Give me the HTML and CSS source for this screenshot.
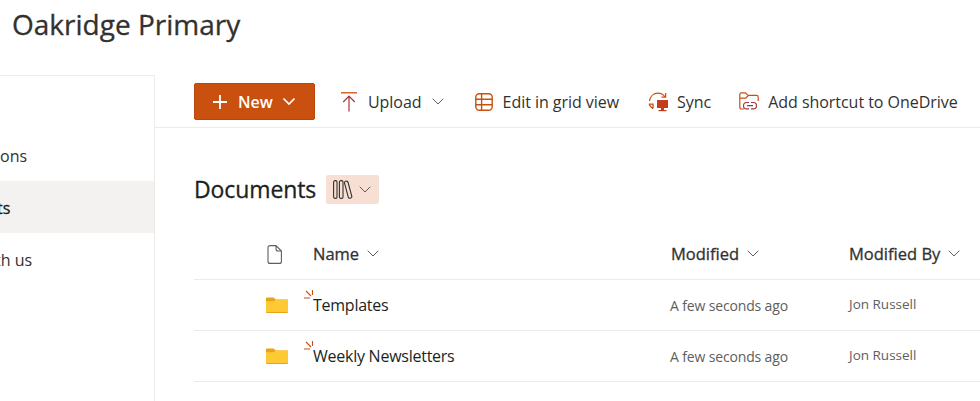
FILE: index.html
```
<!DOCTYPE html>
<html lang="en">
<head>
<meta charset="utf-8">
<title>Oakridge Primary</title>
<link rel="stylesheet" href="styles.css">
</head>
<body>
<header class="site-header"><h1 class="site-title">Oakridge Primary</h1></header>
<div class="shell">
  <nav class="side-nav">
    <a class="nav-item">ons</a>
    <a class="nav-item nav-item-active">ts</a>
    <a class="nav-item nav-item-last">th us</a>
  </nav>
  <main class="content">
    <div class="command-bar">
      <button class="new-btn">
        <svg class="new-plus" width="16" height="16" viewBox="0 0 16 16"><path d="M8 1v14M1 8h14" stroke="#fff" stroke-width="1.8" fill="none"/></svg>
        <span>New</span>
        <svg width="14" height="9" viewBox="0 0 14 9"><path d="M1.5 1.5 7 7l5.5-5.5" stroke="#fff" stroke-width="1.6" fill="none"/></svg>
      </button>
      <div class="cmd cmd-upload">
        <svg class="cmd-icon" width="16" height="20" viewBox="0 0 16 20"><path d="M0 .8h16" stroke="#ca5010" stroke-width="1.3" fill="none"/><path d="M8 19.5V4.5M2.2 10 8 4.2 13.8 10" stroke="#a4373a" stroke-width="1.2" fill="none"/></svg>
        <span>Upload</span>
        <svg class="chev" width="12" height="7" viewBox="0 0 12 7"><path d="M.7.7 6 6l5.3-5.3" stroke="#605e5c" stroke-width="1" fill="none"/></svg>
      </div>
      <div class="cmd cmd-grid">
        <svg class="cmd-icon" width="18" height="18" viewBox="0 0 18 18"><rect x=".8" y=".8" width="16.4" height="16.4" rx="3.5" stroke="#ca5010" stroke-width="1.4" fill="none"/><path d="M.8 6.3h16.4M.8 11.7h16.4M6.6.8v16.4" stroke="#ca5010" stroke-width="1.4" fill="none"/></svg>
        <span>Edit in grid view</span>
      </div>
      <div class="cmd cmd-sync">
        <svg class="cmd-icon" width="21" height="20" viewBox="0 0 21 20"><path d="M1.5 9C2.2 4.5 5.5 1.2 10 1.2c3 0 5.3 1.4 6.8 3.6" stroke="#ca5010" stroke-width="1.3" fill="none"/><path d="M17.6 1v4.2h-4.2" stroke="#ca5010" stroke-width="1.3" fill="none"/><path d="M.8 12.2h4.2v4.2M1.2 12.6c.8 1.8 2 3 3.8 4" stroke="#ca5010" stroke-width="1.3" fill="none"/><rect x="9" y="8" width="11" height="8" fill="#c43e1c"/><rect x="13" y="16" width="3" height="2" fill="#c43e1c"/><rect x="10.5" y="18" width="8" height="1.2" fill="#c43e1c"/></svg>
        <span>Sync</span>
      </div>
      <div class="cmd cmd-shortcut">
        <svg class="cmd-icon" width="20" height="20" viewBox="0 0 20 20"><path d="M5 17H2.5A1.7 1.7 0 0 1 .8 15.300V2.600A1.700 1.700 0 0 1 2.500.9h4l2.500 2.500h8.500A1.700 1.700 0 0 1 19.200 5.100V9M.8 6.200h6l2.500-2.700" stroke="#ca5010" stroke-width="1.200" fill="none"/><path d="M10 10.500H7.700a3.200 3.200 0 0 0 0 6.400H10M12 10.500h2.300a3.200 3.200 0 0 1 0 6.400H12M8 13.700h6" stroke="#a4373a" stroke-width="1.200" fill="none"/></svg>
        <span>Add shortcut to OneDrive</span>
      </div>
    </div>
    <section class="library">
      <div class="library-head">
        <h2 class="library-title">Documents</h2>
        <div class="view-pill">
          <svg width="20" height="19" viewBox="0 0 20 19"><g stroke="#323130" stroke-width="1.100" fill="none"><rect x=".6" y=".6" width="3.400" height="17.800" rx="1.500"/><rect x="6.400" y=".6" width="3.600" height="17.800" rx="1.500"/><rect x="13.300" y="1" width="3.600" height="17.400" rx="1.500" transform="rotate(-15 15 9.500)"/></g></svg>
          <svg width="12" height="7" viewBox="0 0 12 7"><path d="M.7.7 6 6l5.300-5.300" stroke="#605e5c" stroke-width="1" fill="none"/></svg>
        </div>
      </div>
      <div class="doc-row doc-head">
        <span class="doc-icon-cell"><svg width="15" height="19" viewBox="0 0 15 19"><path d="M3 .6h6l5.400 5.400v10.400a2 2 0 0 1-2 2H3a2 2 0 0 1-2-2V2.600a2 2 0 0 1 2-2ZM9 .6V4a2 2 0 0 0 2 2h3.400" stroke="#605e5c" stroke-width="1.100" fill="none"/></svg></span>
        <span class="head-cell">Name<svg class="chev" width="12" height="7" viewBox="0 0 12 7"><path d="M.7.7 6 6l5.300-5.300" stroke="#605e5c" stroke-width="1" fill="none"/></svg></span>
        <span class="head-cell">Modified<svg class="chev" width="12" height="7" viewBox="0 0 12 7"><path d="M.7.7 6 6l5.300-5.300" stroke="#605e5c" stroke-width="1" fill="none"/></svg></span>
        <span class="head-cell">Modified By<svg class="chev" width="12" height="7" viewBox="0 0 12 7"><path d="M.7.7 6 6l5.300-5.300" stroke="#605e5c" stroke-width="1" fill="none"/></svg></span>
      </div>
      <div class="doc-row">
        <span class="doc-icon-cell"><svg class="folder" width="22" height="17" viewBox="0 0 22 17"><path d="M1 16h20a1 1 0 0 0 1-1V3.500a1 1 0 0 0-1-1H10L7.500.5H1a1 1 0 0 0-1 1V15a1 1 0 0 0 1 1Z" fill="#e8a317"/><path d="M0 4.300h7.500L10 2.500h11a1 1 0 0 1 1 1V14a1 1 0 0 1-1 1H1a1 1 0 0 1-1-1Z" fill="#ffc933"/></svg></span>
        <span class="name-cell"><svg class="glimmer" width="10" height="10" viewBox="0 0 10 10"><path d="M8.500 0v5M2 1l5 5M0 8h6" stroke="#c8501a" stroke-width="1.100" fill="none"/></svg>Templates</span>
        <span class="date-cell">A few seconds ago</span>
        <span class="author-cell">Jon Russell</span>
      </div>
      <div class="doc-row">
        <span class="doc-icon-cell"><svg class="folder" width="22" height="17" viewBox="0 0 22 17"><path d="M1 16h20a1 1 0 0 0 1-1V3.500a1 1 0 0 0-1-1H10L7.500.5H1a1 1 0 0 0-1 1V15a1 1 0 0 0 1 1Z" fill="#e8a317"/><path d="M0 4.300h7.500L10 2.500h11a1 1 0 0 1 1 1V14a1 1 0 0 1-1 1H1a1 1 0 0 1-1-1Z" fill="#ffc933"/></svg></span>
        <span class="name-cell"><svg class="glimmer" width="10" height="10" viewBox="0 0 10 10"><path d="M8.500 0v5M2 1l5 5M0 8h6" stroke="#c8501a" stroke-width="1.100" fill="none"/></svg>Weekly Newsletters</span>
        <span class="date-cell">A few seconds ago</span>
        <span class="author-cell">Jon Russell</span>
      </div>
    </section>
  </main>
</div>
</body>
</html>
```
FILE: styles.css
```
* { box-sizing: border-box; }
html, body { margin: 0; height: 100%; overflow: hidden; }
body { font-family: "Open Sans", "Noto Sans", sans-serif; color: #201f1e; background: #fff; width: 980px; height: 401px; }
.site-header { height: 75px; padding: 5px 0 0 12px; }
.site-title { margin: 0; font-size: 28px; line-height: 38px; font-weight: 400; color: #323130; -webkit-text-stroke: .3px #323130; }
.shell { display: flex; height: 326px; }
.side-nav { width: 155px; flex: none; border-top: 1px solid #edebe9; border-right: 1px solid #edebe9; padding-top: 53px; font-size: 16px; overflow: hidden; }
.nav-item { display: block; height: 52px; line-height: 54px; color: #323130; }
.nav-item-active { background: #f3f2f1; color: #201f1e; text-indent: -3px; -webkit-text-stroke: .3px #201f1e; }
.nav-item-last { text-indent: -5px; }
.content { flex: 1; min-width: 0; }
.command-bar { height: 53px; border-bottom: 1px solid #edebe9; padding: 8px 0 0 39px; display: flex; align-items: flex-start; font-size: 16px; letter-spacing: -.04px; white-space: nowrap; overflow: hidden; }
.new-btn { width: 121px; height: 37px; flex: none; margin: 0; padding: 0 0 0 17px; display: flex; align-items: center; background: #ca5010; border: 1px solid #b9470c; border-radius: 2px; color: #fff; font: 600 16px "Open Sans", sans-serif; }
.new-btn span { margin: 0 9px 0 10px; }
.cmd { height: 37px; display: flex; align-items: center; color: #323130; }
.cmd-icon { flex: none; }
.cmd-upload { margin-left: 26px; }
.cmd-upload .cmd-icon { margin-right: 11px; }
.cmd-upload .chev { margin-left: 10px; }
.cmd-grid { margin-left: 31px; }
.cmd-grid .cmd-icon { margin-right: 10px; }
.cmd-sync { margin-left: 29px; }
.cmd-sync .cmd-icon { margin-right: 8px; }
.cmd-shortcut { margin-left: 28px; }
.cmd-shortcut .cmd-icon { margin-right: 9px; }
.library { padding: 47px 0 0 39px; }
.library-head { display: flex; align-items: center; height: 29px; }
.library-title { margin: -2px 0 0; font-size: 23px; font-weight: 400; letter-spacing: -.1px; color: #201f1e; -webkit-text-stroke: .3px #201f1e; }
.view-pill { width: 53px; height: 29px; margin-left: 10px; padding-left: 7px; display: flex; align-items: center; gap: 6px; background: #f8dfd4; border-radius: 2px; }
.doc-row { display: grid; grid-template-columns: 119px 358px 178px 1fr; align-items: center; height: 51px; border-bottom: 1px solid #edebe9; white-space: nowrap; }
.doc-head { margin-top: 25px; }
.doc-icon-cell { display: flex; padding-left: 72px; }
.doc-head .doc-icon-cell { padding-left: 73px; }
.head-cell { display: flex; align-items: center; padding-bottom: 2px; font-size: 16.5px; font-weight: 400; color: #323130; -webkit-text-stroke: .3px #323130; }
.head-cell .chev { margin-left: 8px; }
.name-cell { position: relative; font-size: 16px; letter-spacing: -.25px; color: #201f1e; }
.glimmer { position: absolute; left: -9px; top: -4px; }
.date-cell { margin-left: -1px; font-size: 14px; letter-spacing: -.15px; color: #605e5c; }
.author-cell { font-size: 13.5px; color: #605e5c; margin-top: -3px; }
```
